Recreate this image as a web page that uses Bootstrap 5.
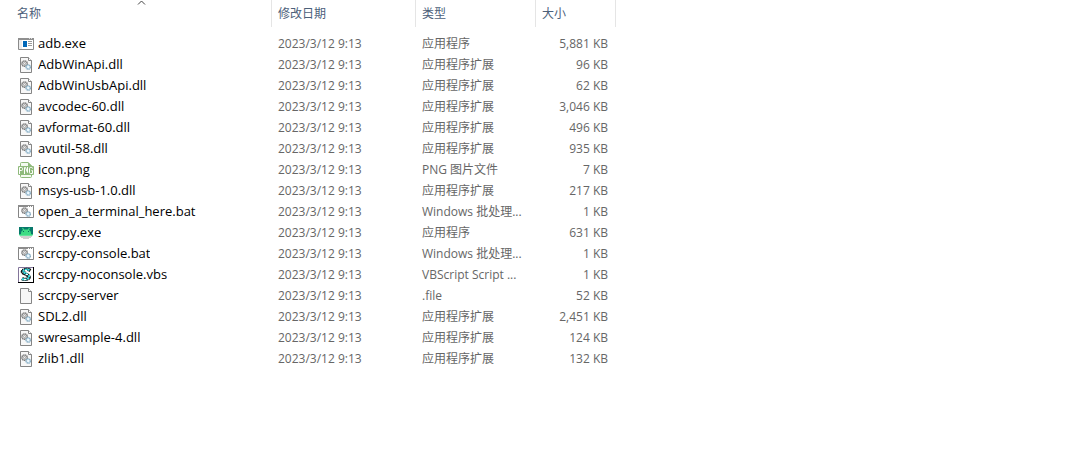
<!DOCTYPE html>
<html lang="zh-CN">
<head>
<meta charset="utf-8">
<meta name="viewport" content="width=device-width, initial-scale=1">
<title>scrcpy</title>
<link href="https://cdn.jsdelivr.net/npm/bootstrap@5.3.0/dist/css/bootstrap.min.css" rel="stylesheet">
<style>
body{font-family:"Open Sans","Noto Sans CJK SC",sans-serif;font-size:12px;line-height:21px;color:#000;background:#fff}
.file-table{max-width:616px;table-layout:fixed;border-collapse:separate;border-spacing:0;color:#666}
.file-table th{height:27px;padding:0 6px;font-weight:400;color:#4c607a;border-right:1px solid #e5e5e5}
.file-table td{height:21px;padding:0 6px}
.file-table th:first-child,.file-table td:first-child{padding-left:17px}
.file-table td:last-child{padding-right:8px}
.file-table tbody::before{content:"";display:block;height:6px}
.file-name{color:#000;gap:4px;font-size:13px}
.c-name{width:272px}.c-date{width:144px}.c-kind{width:120px}
.sort-mark{left:137px}
.file-icon{width:16px;height:16px;margin-left:1px}
</style>
</head>
<body>
<svg class="d-none" aria-hidden="true">
<symbol id="gears" viewBox="0 0 10 10"><circle cx="3.6" cy="3.6" r="2.7" fill="#e6e6e6" stroke="#7d7d7d" stroke-width="1.5" stroke-dasharray="1.4 .4"/><circle cx="3.6" cy="3.6" r="1" fill="#fff" stroke="#888" stroke-width=".7"/><circle cx="7.2" cy="7" r="2.200" fill="#d8edf9" stroke="#84a9bf" stroke-width="1.300" stroke-dasharray="1.3 .4"/><circle cx="7.2" cy="7" r=".8" fill="#fff"/></symbol>
<symbol id="exe" viewBox="0 0 16 16"><path d="M.5 2.5h15v11H.5z" fill="#fff" stroke="#8a8a8a"/><path d="M0 2h16v2H0z" fill="#8f8f8f"/><path d="M11 2h1v1h-1zm2 0h1v1h-1z" fill="#ddd"/><path d="M1 4h3v9H1z" fill="#ececec"/><path d="M5 5h4v6H5z" fill="#0067b8"/><path d="M10 5.500h4M10 7.500h4M10 9.500h4" stroke="#9a9a9a"/></symbol>
<symbol id="page" viewBox="0 0 16 16"><path d="M2.500 .5h8l3 3v12h-11z" fill="#f7f7f7" stroke="#858585"/><path d="M10.500 .5v3h3" fill="#fff" stroke="#858585"/></symbol>
<symbol id="dll" viewBox="0 0 16 16"><use href="#page"/><use href="#gears" x="3" y="3" width="10" height="10"/></symbol>
<symbol id="bat" viewBox="0 0 16 16"><path d="M.5 1.500h15v12H.5z" fill="#fff" stroke="#858585"/><path d="M0 1h16v2H0z" fill="#8c8c8c"/><path d="M10 2h1v1h-1zm2 0h1v1h-1zm2 0h1v1h-1z" fill="#fff"/><use href="#gears" x="3" y="3" width="10" height="10"/></symbol>
<symbol id="png" viewBox="0 0 16 16"><path d="M2.500 5V1.500q0-1 1-1H10L13.500 4v1M2.500 12v2.500q0 1 1 1h9q1 0 1-1V12" fill="#f4faf0" stroke="#8fba7b"/><path d="M10 0v4h4z" fill="#8fba7b"/><rect y="4" width="16" height="9" rx="1" fill="#8fba7b"/><path d="M1.500 12V5.500h2q1 0 1 1v1q0 1-1 1h-2M6.500 12V5.500h1l2 5h0V5M14.500 6.500q0-1-1-1h-1q-1 0-1 1v4q0 1 1 1h2v-3h-1" fill="none" stroke="#fff"/></symbol>
<symbol id="droid" viewBox="0 0 16 16"><path d="M1 2h14v8H1z" fill="#08786b"/><path d="M3 10V8q0-2 2-3L4 3l1-.3L6.200 4.500h3.600L11 2.700l1 .3-1 2q2 1 2 3v2z" fill="#3ddc84"/><path d="M5 6h1v1H5zm5 0h1v1h-1z" fill="#066b5f"/><path d="M1 9h14v1l-1 1H2l-1-1z" fill="#3ddc84" opacity=".8"/><path d="M2 11h12v1H2zm1 1h10v1H3zm2 1h6v1H5z" fill="#cfcfcf"/></symbol>
<symbol id="vbs" viewBox="0 0 16 16"><path d="M.5.5h15v15H.5z" fill="#fff" stroke="#82759a"/><path d="M15 0h1v16H0v-1h15z" fill="#000"/><path d="M12.500 3.500Q9 1.500 6 3 2.500 5 6.500 6.500l3.500 2q2.500 2-.5 3.500-3 1-5.500-.5" fill="none" stroke="#111" stroke-width="3.400" stroke-dasharray="3 .4"/><path d="M11.500 3Q9 2 6 3 4 5 7 6l3 2q3 2-1 4-2 1-5 0" fill="none" stroke="#37e0e8" stroke-width="2" stroke-dasharray="2 .7"/><path d="M7 3h2v1H7zm1 4h2v1H8zM6 12h2v1H6zM3 2h1v1H3z" fill="#fff"/></symbol>
</svg>
<main class="position-relative">
<svg class="sort-mark position-absolute top-0" width="9" height="5" aria-hidden="true"><path d="M1 4.500 4.500 1 8 4.500" fill="none" stroke="#444"/></svg>
<table class="file-table w-100">
<colgroup><col class="c-name"><col class="c-date"><col class="c-kind"><col></colgroup>
<thead><tr><th scope="col">名称</th><th scope="col">修改日期</th><th scope="col">类型</th><th scope="col">大小</th></tr></thead>
<tbody id="files"></tbody>
</table>
</main>
<script src="https://cdn.jsdelivr.net/npm/bootstrap@5.3.0/dist/js/bootstrap.bundle.min.js"></script>
<script>
const app='应用程序', ext='应用程序扩展', batch='Windows 批处理...';
const files=[
['exe','adb.exe',app,'5,881'],['dll','AdbWinApi.dll',ext,'96'],['dll','AdbWinUsbApi.dll',ext,'62'],
['dll','avcodec-60.dll',ext,'3,046'],['dll','avformat-60.dll',ext,'496'],['dll','avutil-58.dll',ext,'935'],
['png','icon.png','PNG 图片文件','7'],['dll','msys-usb-1.0.dll',ext,'217'],['bat','open_a_terminal_here.bat',batch,'1'],
['droid','scrcpy.exe',app,'631'],['bat','scrcpy-console.bat',batch,'1'],['vbs','scrcpy-noconsole.vbs','VBScript Script ...','1'],
['page','scrcpy-server','.file','52'],['dll','SDL2.dll',ext,'2,451'],['dll','swresample-4.dll',ext,'124'],['dll','zlib1.dll',ext,'132']];
document.getElementById('files').innerHTML=files.map(([icon,name,kind,size])=>`<tr>
<td><div class="file-name d-flex align-items-center"><svg class="file-icon flex-shrink-0" aria-hidden="true"><use href="#${icon}"/></svg><span class="text-truncate">${name}</span></div></td>
<td>2023/3/12 9:13</td><td class="text-nowrap">${kind}</td><td class="text-end">${size} KB</td></tr>`).join('');
</script>
</body>
</html>
